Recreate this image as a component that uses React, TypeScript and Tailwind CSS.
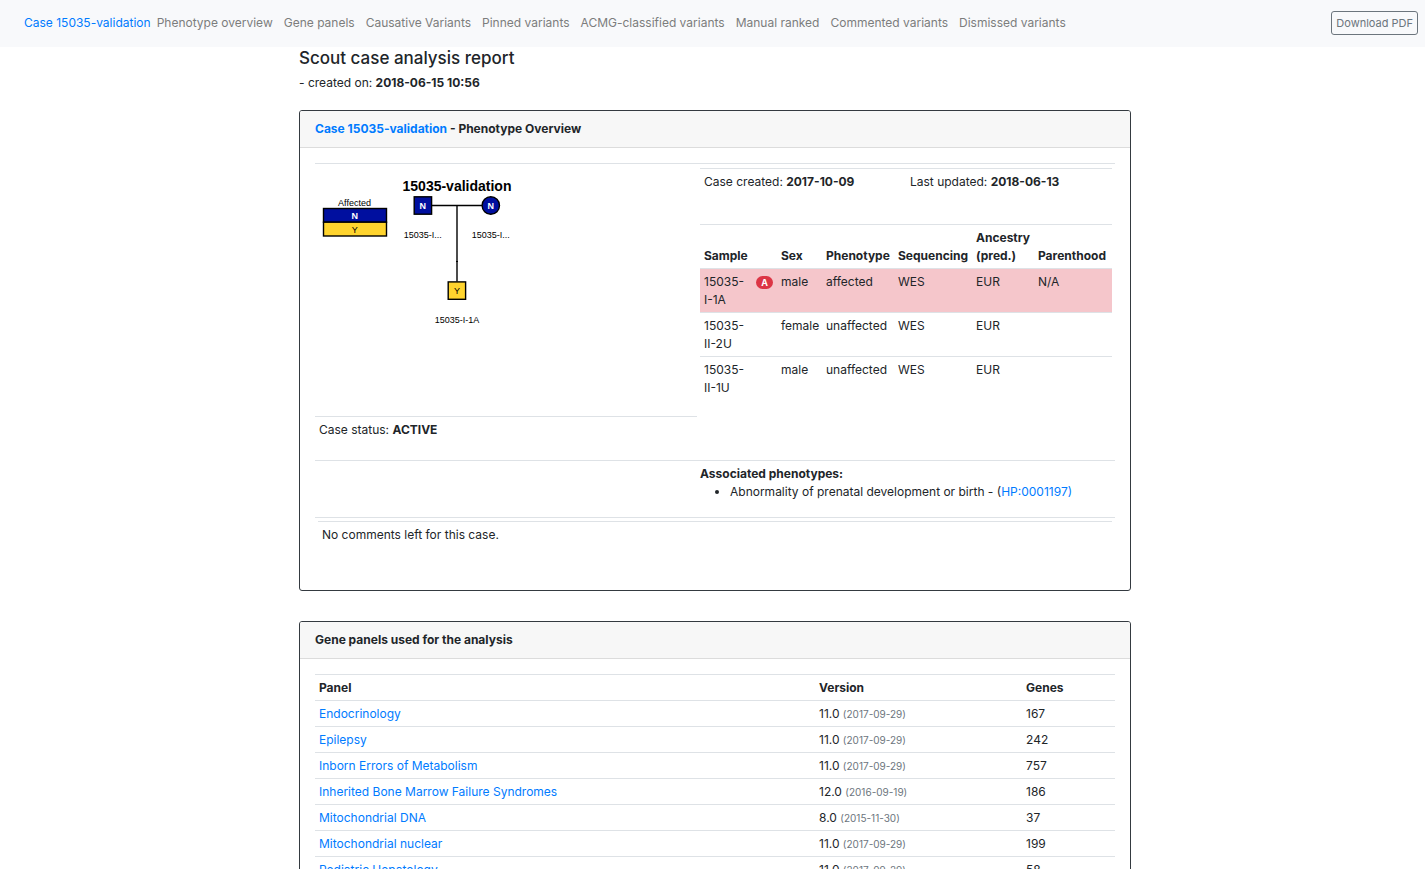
import React from 'react';

const navLinks = [
  'Phenotype overview',
  'Gene panels',
  'Causative Variants',
  'Pinned variants',
  'ACMG-classified variants',
  'Manual ranked',
  'Commented variants',
  'Dismissed variants',
];

const samples = [
  { name: ['15035-', 'I-1A'], affected: true, sex: 'male', phenotype: 'affected', sequencing: 'WES', ancestry: 'EUR', parenthood: 'N/A' },
  { name: ['15035-', 'II-2U'], affected: false, sex: 'female', phenotype: 'unaffected', sequencing: 'WES', ancestry: 'EUR', parenthood: '' },
  { name: ['15035-', 'II-1U'], affected: false, sex: 'male', phenotype: 'unaffected', sequencing: 'WES', ancestry: 'EUR', parenthood: '' },
];

const panels = [
  { name: 'Endocrinology', version: '11.0', date: '2017-09-29', genes: 167 },
  { name: 'Epilepsy', version: '11.0', date: '2017-09-29', genes: 242 },
  { name: 'Inborn Errors of Metabolism', version: '11.0', date: '2017-09-29', genes: 757 },
  { name: 'Inherited Bone Marrow Failure Syndromes', version: '12.0', date: '2016-09-19', genes: 186 },
  { name: 'Mitochondrial DNA', version: '8.0', date: '2015-11-30', genes: 37 },
  { name: 'Mitochondrial nuclear', version: '11.0', date: '2017-09-29', genes: 199 },
  { name: 'Pediatric Hepatology', version: '11.0', date: '2017-09-29', genes: 58 },
];

function Navbar() {
  return (
    <nav className="flex min-h-[47px] items-center justify-between bg-[#f8f9fb] pb-0.5 pl-6 pr-[7px]">
      <div className="flex flex-wrap items-center gap-x-[11px]">
        <a href="#case" className="-mr-[5px] text-[#007bff]">Case 15035-validation</a>
        {navLinks.map((label) => (
          <a key={label} href="#report" className="text-[#7c7d7d]">{label}</a>
        ))}
      </div>
      <button type="button" className="h-6 shrink-0 rounded-[3px] border border-[#6c757d] px-1 text-[11px] leading-4 text-[#6c757d]">
        Download PDF
      </button>
    </nav>
  );
}

function Card({ title, children }: { title: React.ReactNode; children: React.ReactNode }) {
  return (
    <section className="overflow-hidden rounded-[3px] border border-[#343a40] bg-white">
      <h2 className="border-b border-[#dcdcdc] bg-[#f7f7f7] px-[15px] py-[9px] font-bold">{title}</h2>
      <div className="p-[15px]">{children}</div>
    </section>
  );
}

function Pedigree() {
  return (
    <svg width="240" height="180" viewBox="300 155 240 180" className="-ml-[15px] -mt-[9px] block" fontFamily='"Liberation Sans", Arial, sans-serif' fontSize="9" textAnchor="middle" role="img" aria-label="Pedigree of 15035-validation">
      <text x="457" y="191" fontSize="14" fontWeight="bold">15035-validation</text>
      <text x="354.5" y="206">Affected</text>
      <g stroke="#000" strokeWidth="1.4">
        <rect x="323.5" y="208.5" width="63" height="13.7" fill="#000f9f" />
        <rect x="323.5" y="222.2" width="63" height="13.8" fill="#ffd42e" />
        <path d="M432 205.5H482M457 205.5V281.5" fill="none" />
        <rect x="414.2" y="196.8" width="17.4" height="17.4" fill="#000f9f" />
        <circle cx="490.8" cy="205.5" r="8.7" fill="#000f9f" />
        <rect x="448.2" y="281.9" width="17.4" height="17.4" fill="#ffd42e" />
      </g>
      <path d="M456 261.5h2" stroke="#000" />
      <g fill="#fff" fontWeight="bold">
        <text x="354.7" y="219">N</text>
        <text x="422.8" y="209">N</text>
        <text x="490.8" y="209">N</text>
      </g>
      <text x="354.7" y="233">Y</text>
      <text x="457" y="294">Y</text>
      <text x="422.8" y="238">15035-I...</text>
      <text x="490.8" y="238">15035-I...</text>
      <text x="457" y="323">15035-I-1A</text>
    </svg>
  );
}

function SampleTable() {
  return (
    <table className="w-full table-fixed border-collapse text-left">
      <colgroup>
        <col className="w-[52px]" />
        <col className="w-[25px]" />
        <col className="w-[45px]" />
        <col className="w-[72px]" />
        <col className="w-[78px]" />
        <col className="w-[62px]" />
        <col className="w-[78px]" />
      </colgroup>
      <thead>
        <tr className="h-11 border-t border-[#dee2e6] align-bottom">
          <th scope="col" colSpan={2} className="px-1 py-[3px]">Sample</th>
          <th scope="col" className="px-1 py-[3px]">Sex</th>
          <th scope="col" className="px-1 py-[3px]">Phenotype</th>
          <th scope="col" className="px-1 py-[3px]">Sequencing</th>
          <th scope="col" className="px-1 py-[3px]">Ancestry (pred.)</th>
          <th scope="col" className="px-1 py-[3px]">Parenthood</th>
        </tr>
      </thead>
      <tbody>
        {samples.map((s) => (
          <tr key={s.name.join('')} className={s.affected ? 'h-11 border-t border-[#dee2e6] bg-[#f5c6cb] align-top' : 'h-11 border-t border-[#dee2e6] align-top'}>
            <td className="px-1 pt-1">{s.name[0]}<br />{s.name[1]}</td>
            <td className="px-1 pt-1">
              {s.affected && (
                <span className="mt-[3px] flex h-[13px] w-[17px] items-center justify-center rounded-full bg-[#dc3545] text-[9px] font-bold leading-none text-white">A</span>
              )}
            </td>
            <td className="px-1 pt-1">{s.sex}</td>
            <td className="px-1 pt-1">{s.phenotype}</td>
            <td className="px-1 pt-1">{s.sequencing}</td>
            <td className="px-1 pt-1">{s.ancestry}</td>
            <td className="px-1 pt-1">{s.parenthood}</td>
          </tr>
        ))}
      </tbody>
    </table>
  );
}

function PhenotypeOverview() {
  return (
    <Card title={<><a href="#case" className="text-[#007bff]">Case 15035-validation</a> - Phenotype Overview</>}>
      <div className="grid grid-cols-[382fr_412fr] gap-x-[3px] border-t border-[#dee2e6] pr-[3px]">
        <div className="flex flex-col justify-between">
          <Pedigree />
          <p className="border-t border-[#dee2e6] px-1 pb-[21px] pt-1">Case status: <strong>ACTIVE</strong></p>
        </div>
        <div className="pb-[59px] pt-1">
          <div className="grid grid-cols-2 border-t border-[#dee2e6] px-1 pb-[33px] pt-1">
            <p>Case created: <strong>2017-10-09</strong></p>
            <p className="pl-1">Last updated: <strong>2018-06-13</strong></p>
          </div>
          <SampleTable />
        </div>
      </div>
      <div className="grid grid-cols-[382fr_412fr] gap-x-[3px] border-t border-[#dee2e6] pb-4 pr-[3px] pt-1">
        <div className="col-start-2">
          <h3 className="font-bold">Associated phenotypes:</h3>
          <ul className="list-disc pl-[30px]">
            <li>Abnormality of prenatal development or birth - (<a href="#hpo" className="text-[#007bff]">HP:0001197)</a></li>
          </ul>
        </div>
      </div>
      <div className="border-t border-[#dee2e6] px-[3px] pt-[3px]">
        <p className="border-t border-[#dee2e6] px-1 pb-[31px] pt-1">No comments left for this case.</p>
      </div>
    </Card>
  );
}

function GenePanels() {
  return (
    <Card title="Gene panels used for the analysis">
      <table className="w-full table-fixed border-collapse text-left">
        <colgroup>
          <col className="w-[500px]" />
          <col className="w-[207px]" />
          <col className="w-[93px]" />
        </colgroup>
        <thead>
          <tr className="h-[26px] border-t border-[#dee2e6]">
            <th scope="col" className="px-1 pt-0.5">Panel</th>
            <th scope="col" className="px-1 pt-0.5">Version</th>
            <th scope="col" className="px-1 pt-0.5">Genes</th>
          </tr>
        </thead>
        <tbody>
          {panels.map((p) => (
            <tr key={p.name} className="h-[26px] border-t border-[#dee2e6]">
              <td className="px-1 pt-0.5"><a href="#panel" className="text-[#007bff]">{p.name}</a></td>
              <td className="px-1 pt-0.5">{p.version} <small className="text-[10px] text-[#6c757d]">({p.date})</small></td>
              <td className="px-1 pt-0.5">{p.genes}</td>
            </tr>
          ))}
        </tbody>
      </table>
    </Card>
  );
}

export default function App() {
  return (
    <div className="min-h-screen bg-white font-['Inter','Liberation_Sans',sans-serif] text-[12px] leading-[18px] text-[#212529]">
      <Navbar />
      <div className="pl-[5px]">
        <main className="mx-auto max-w-[832px]">
          <h1 className="text-[17px] font-medium leading-[22px]">Scout case analysis report</h1>
          <p className="mb-[18px] mt-[5px]">- created on: <strong>2018-06-15 10:56</strong></p>
          <div className="flex flex-col gap-[30px]">
            <PhenotypeOverview />
            <GenePanels />
          </div>
        </main>
      </div>
    </div>
  );
}
